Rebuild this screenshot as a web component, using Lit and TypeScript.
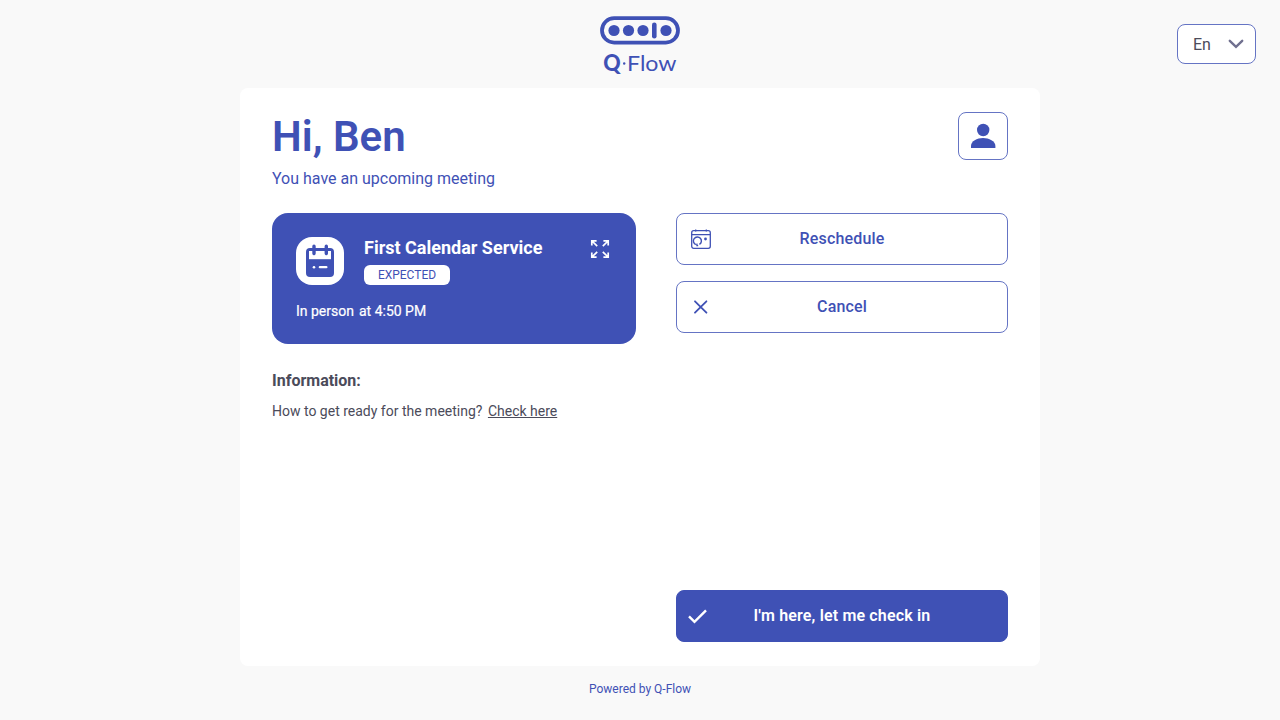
import { LitElement, html, css } from "lit";
import { customElement, property } from "lit/decorators.js";

@customElement("action-button")
class ActionButton extends LitElement {
  @property() label = "";
  @property({ type: Boolean, reflect: true }) primary = false;

  static styles = css`
    :host { display: block; height: 52px; }
    .btn {
      display: grid; grid-template-columns: 48px 1fr 48px; align-items: center;
      box-sizing: border-box; width: 100%; height: 100%; padding: 0;
      background: #fff; color: #3f51b5; border: 1px solid #6574c4; border-radius: 8px;
      font: 500 16px/24px Roboto, sans-serif; letter-spacing: 0.16px; text-align: center;
    }
    :host([primary]) .btn { background: #3f51b5; border-color: #3f51b5; color: #fff; font-weight: 600; }
    .icon { display: flex; }
  `;

  render() {
    return html`<button class="btn">
      <span class="icon"><slot></slot></span><span>${this.label}</span>
    </button>`;
  }
}

@customElement("app-root")
class AppRoot extends LitElement {
  static styles = css`
    :host {
      display: flex; flex-direction: column; height: 720px; background: #f9f9f9;
      font-family: Roboto, sans-serif; color: #4b4b5a; overflow: hidden;
    }
    svg { display: block; }
    .header {
      display: grid; grid-template-columns: 1fr 80px 1fr; height: 88px; flex: none; box-sizing: border-box;
      padding: 0 24px; align-items: start;
    }
    .brand { grid-column: 2; padding-top: 16px; }
    .brand text { font-family: Lato, sans-serif; font-size: 22px; fill: #3f51b5; }
    .brand .q { font-weight: 900; }
    .lang {
      display: flex; align-items: center; justify-content: space-between; justify-self: end;
      box-sizing: border-box; width: 79px; height: 40px; margin-top: 24px; padding: 0 11px 0 15px;
      background: #fff; border: 1px solid #6574c4; border-radius: 8px; color: inherit;
      font: 400 16px/24px Roboto, sans-serif;
    }
    .lang span { padding-top: 2px; }
    .panel {
      display: flex; flex-direction: column; box-sizing: border-box; width: 800px;
      height: 578.4px; margin: 0 auto; padding: 24px 32px; background: #fff; border-radius: 8px;
    }
    .top { display: flex; justify-content: space-between; align-items: flex-start; height: 100.67px; flex: none; }
    h1 { margin: 0; font-size: 42px; line-height: 50px; font-weight: 600; color: #3f51b5; }
    .sub { margin: 5px 0 0; font-size: 16px; line-height: 24px; color: #3f51b5; }
    .user {
      display: grid; place-items: center; box-sizing: border-box; width: 50px; height: 48px;
      padding: 0; background: #fff; border: 1px solid #6574c4; border-radius: 8px;
    }
    .body { display: grid; grid-template-columns: 364px 332px; justify-content: space-between; flex: 1; }
    .card {
      box-sizing: border-box; height: 131.33px; padding: 24px; border-radius: 16px;
      background: #3f51b5; color: #fff;
    }
    .card-head { display: grid; grid-template-columns: 48px 1fr 24px; column-gap: 20px; height: 48px; }
    .tile { display: grid; place-items: center; height: 48px; background: #fff; border-radius: 16px; }
    .service { font-size: 18px; line-height: 22px; font-weight: 700; white-space: nowrap; }
    .badge {
      width: 86px; height: 20px; margin-top: 6px; border-radius: 6px; background: #fff;
      color: #3f51b5; font-size: 12px; line-height: 20px; text-align: center;
    }
    .when {
      display: flex; gap: 5px; margin-top: 16px; font-size: 14px; line-height: 20px;
      font-weight: 400; -webkit-text-stroke: 0.2px #fff;
    }
    .info-title { margin: 25px 0 0; font-size: 16px; line-height: 24px; font-weight: 700; }
    .info { margin: 8px 0 0; font-size: 14px; line-height: 20px; }
    .info a { color: inherit; margin-left: 2px; text-decoration: underline; }
    .actions { display: flex; flex-direction: column; gap: 16px; }
    .checkin { margin-top: auto; }
    .footer { padding-top: 12.6px; font-size: 12px; line-height: 20px; text-align: center; color: #3f51b5; }
    .i-cal { margin-left: 14px; }
    .i-x { margin-left: 17px; }
    .i-check { margin-left: 11px; }
  `;

  render() {
    return html`
      <header class="header">
        <div class="brand">
          <svg width="80" height="60" viewBox="0 0 80 60" fill="#3f51b5">
            <rect x="2" y="2.2" width="76" height="24.4" rx="12.2" fill="none" stroke="#3f51b5" stroke-width="3.8" />
            <circle cx="14" cy="14.5" r="5.6" /><circle cx="28.5" cy="14.5" r="5.6" />
            <circle cx="43" cy="14.5" r="5.6" /><circle cx="66" cy="14.5" r="5.6" />
            <rect x="52" y="6.5" width="4.6" height="16" rx="2.3" />
            <text class="q" x="3.3" y="55" textLength="17.4" lengthAdjust="spacingAndGlyphs">Q</text>
            <circle cx="24.2" cy="47.5" r="1.2" />
            <text x="27" y="55" textLength="49.5" lengthAdjust="spacingAndGlyphs">Flow</text>
          </svg>
        </div>
        <button class="lang">
          <span>En</span>
          <svg width="16" height="10" viewBox="0 0 16 10" fill="none" stroke="#70708f" stroke-width="2.4" stroke-linecap="round">
            <path d="m1.8 1.8 6.2 6 6.2-6" />
          </svg>
        </button>
      </header>
      <main class="panel">
        <div class="top">
          <div><h1>Hi, Ben</h1><p class="sub">You have an upcoming meeting</p></div>
          <button class="user" aria-label="Profile">
            <svg width="26" height="26" viewBox="0 0 26 26" fill="#3f51b5">
              <circle cx="13.2" cy="7" r="6.2" /><path d="M1 25v-2c0-5 6-8 12-8s12.4 3 12.4 8v2z" />
            </svg>
          </button>
        </div>
        <div class="body">
          <section>
            <div class="card">
              <div class="card-head">
                <div class="tile">
                  <svg width="28" height="34" viewBox="0 0 28 34">
                    <rect y="4" width="28" height="29" rx="4" fill="#3f51b5" />
                    <path fill="#fff" d="M3 7h22v8.2H3z" />
                    <path d="M8 2.3v7.2M20.3 2.3v7.2" stroke="#3f51b5" stroke-width="3.4" stroke-linecap="round" />
                    <circle cx="8" cy="23.2" r="1.3" fill="#fff" />
                    <path d="M13.8 23.2h6.6" stroke="#fff" stroke-width="2.2" stroke-linecap="round" />
                  </svg>
                </div>
                <div><div class="service">First Calendar Service</div><div class="badge">EXPECTED</div></div>
                <svg width="24" height="24" viewBox="0 0 24 24" fill="none" stroke="#fff" stroke-width="1.7">
                  <path d="M3.8 8.6V3.8H8.6M4 4l5.2 5.2M15.4 3.8h4.8V8.6M20 4l-5.2 5.2M3.8 15.4v4.8H8.6M4 20l5.2-5.2M20.2 15.4v4.8H15.4M20 20l-5.2-5.2" />
                </svg>
              </div>
              <div class="when"><span>In person</span><span>at 4:50 PM</span></div>
            </div>
            <h2 class="info-title">Information:</h2>
            <p class="info">How to get ready for the meeting? <a>Check here</a></p>
          </section>
          <section class="actions">
            <action-button label="Reschedule">
              <svg class="i-cal" width="20" height="20" viewBox="0 0 20 20" fill="none" stroke="#3f51b5" stroke-width="1.3">
                <rect x=".7" y="1.7" width="18.6" height="17.6" rx="2" />
                <path d="M.7 5.6h18.6M4.7 .6v1.8M15.3 .6v1.8" />
                <path d="M4.8 15.6a4 4 0 1 1 3.6-.2M5.8 14.6l.2 2h1.2" stroke-width="1.4" />
                <circle cx="14.5" cy="10" r="1.4" fill="#3f51b5" stroke="none" />
              </svg>
            </action-button>
            <action-button label="Cancel">
              <svg class="i-x" width="14" height="14" viewBox="0 0 14 14" fill="none" stroke="#3f51b5" stroke-width="1.8" stroke-linecap="round">
                <path d="m1 1.3 11.4 11.4M12.4 1.3 1 12.7" />
              </svg>
            </action-button>
            <action-button class="checkin" primary label="I'm here, let me check in">
              <svg class="i-check" width="20" height="16" viewBox="0 0 20 16" fill="none" stroke="#fff" stroke-width="2.4">
                <path d="m1 8.3 5.5 5.5L18 2.3" />
              </svg>
            </action-button>
          </section>
        </div>
      </main>
      <footer class="footer">Powered by Q-Flow</footer>
    `;
  }
}
